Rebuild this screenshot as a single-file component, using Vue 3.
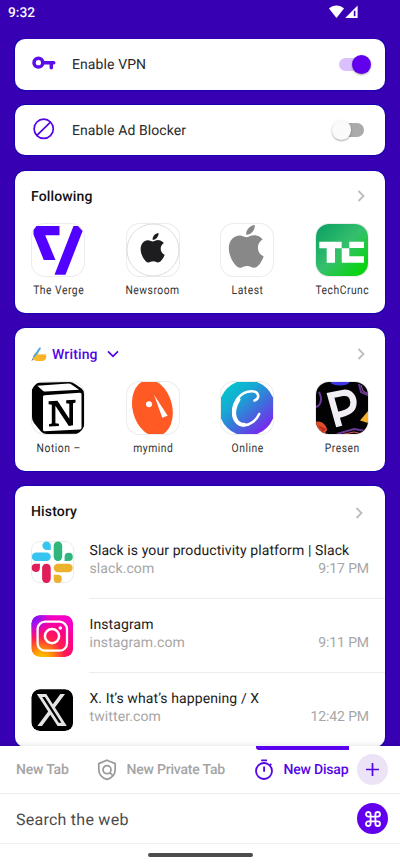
<script setup>
import { ref } from 'vue'

const applePath =
  'M12.152 6.896c-.948 0-2.415-1.078-3.96-1.04-2.04.027-3.91 1.183-4.961 3.014-2.117 3.675-.546 9.103 1.519 12.09 1.013 1.454 2.208 3.09 3.792 3.039 1.52-.065 2.09-.987 3.935-.987 1.831 0 2.35.987 3.96.948 1.637-.026 2.676-1.48 3.676-2.948 1.156-1.688 1.636-3.325 1.662-3.415-.039-.013-3.182-1.221-3.22-4.857-.026-3.04 2.48-4.494 2.597-4.559-1.429-2.09-3.623-2.324-4.39-2.376-2-.156-3.675 1.09-4.61 1.09zM15.53 3.83c.843-1.012 1.4-2.427 1.245-3.83-1.207.052-2.662.805-3.532 1.818-.78.896-1.454 2.338-1.273 3.714 1.338.104 2.715-.688 3.559-1.701'

const vpn = ref(true)
const adBlocker = ref(false)

const following = [
  { id: 'verge', label: 'The Verge' },
  { id: 'newsroom', label: 'Newsroom' },
  { id: 'latest', label: 'Latest' },
  { id: 'techcrunch', label: 'TechCrunc' },
]
const writing = [
  { id: 'notion', label: 'Notion –' },
  { id: 'mymind', label: 'mymind' },
  { id: 'canva', label: 'Online' },
  { id: 'presen', label: 'Presen' },
]
const history = [
  { id: 'slack', title: 'Slack is your productivity platform | Slack', host: 'slack.com', time: '9:17 PM' },
  { id: 'instagram', title: 'Instagram', host: 'instagram.com', time: '9:11 PM' },
  { id: 'x', title: 'X. It’s what’s happening / X', host: 'twitter.com', time: '12:42 PM' },
]
</script>

<template>
  <div class="screen">
    <header class="status">
      <span class="clock">9:32</span>
      <svg class="signals" width="30" height="14" viewBox="0 0 30 14">
        <path d="M0 3.6C4-.6 11-.6 15 3.6L7.5 13z" fill="#fff" />
        <path d="M28.6.6V13H16.2z" fill="#fff" />
        <path d="M25.6 5.8v5.4" stroke="#3700b3" stroke-width="1.6" />
      </svg>
    </header>

    <main class="content">
      <section class="card toggle-card">
        <svg class="lead" width="26" height="26" viewBox="0 0 26 26" fill="none" stroke="#5b0ee8">
          <circle cx="7.4" cy="11.7" r="4.4" stroke-width="3.5" />
          <path d="M12.5 11.7H22.7" stroke-width="3.5" stroke-linecap="round" />
          <path d="M20.3 12.4v4.4" stroke-width="3.5" stroke-linecap="round" />
        </svg>
        <span class="toggle-label">Enable VPN</span>
        <button class="switch" :class="{ on: vpn }" @click="vpn = !vpn"><i></i></button>
      </section>

      <section class="card toggle-card">
        <svg class="lead" width="26" height="26" viewBox="0 0 26 26" fill="none" stroke="#5305e6" stroke-width="1.7">
          <circle cx="12.7" cy="11.8" r="9.6" />
          <path d="M5.9 18.4L19.5 5.2" />
        </svg>
        <span class="toggle-label">Enable Ad Blocker</span>
        <button class="switch" :class="{ on: adBlocker }" @click="adBlocker = !adBlocker"><i></i></button>
      </section>

      <section class="card group">
        <div class="head">
          <h2>Following</h2>
          <svg class="chev" width="8" height="12" viewBox="0 0 8 12"><path d="M1.5 1l5 5-5 5" /></svg>
        </div>
        <div class="tiles">
          <a v-for="s in following" :key="s.id" class="site">
            <span class="tile">
              <svg v-if="s.id === 'verge'" viewBox="0 0 54 54">
                <path d="M5.5 3H28.5V12.3H14.2L24.5 37H12.8L2.5 11.5V7zM42.5 3h4.5l4.6 5L34.5 51.7h-11z" fill="#5200ff" />
              </svg>
              <svg v-else-if="s.id === 'newsroom'" viewBox="0 0 54 54">
                <circle cx="27" cy="27" r="26" fill="#fff" stroke="#dcdcdc" />
                <path :d="applePath" transform="translate(11.9 10) scale(1.23)" fill="#1d1d1f" />
              </svg>
              <svg v-else-if="s.id === 'latest'" viewBox="0 0 54 54">
                <path :d="applePath" transform="translate(4.9 2) scale(1.78)" fill="#888" />
              </svg>
              <svg v-else viewBox="0 0 54 54">
                <defs>
                  <linearGradient id="tc" x1="0" y1="0" x2="1" y2="1">
                    <stop offset="0" stop-color="#0a9e63" />
                    <stop offset=".5" stop-color="#35c06c" />
                    <stop offset=".8" stop-color="#10d021" />
                    <stop offset="1" stop-color="#00d600" />
                  </linearGradient>
                </defs>
                <rect x="1" y="1" width="52" height="52" rx="13" fill="url(#tc)" />
                <path d="M4.3 18.7H26.7V25.2H20V39.7H11.7V25.2H4.3zM34.3 18.7H49v6.2H34.3zM26.7 25.2h7.6v8.1H49v6.4H26.7z" fill="#fff" />
              </svg>
            </span>
            <span class="site-label">{{ s.label }}</span>
          </a>
        </div>
      </section>

      <section class="card group writing">
        <div class="head">
          <svg class="hand" width="16" height="15" viewBox="0 0 16 15">
            <path d="M1.8 9.6C3 6.900 4.800 5.300 6.600 5.100c1.200-.1 1.300.9.6 1.700l-.6.8 7-.4c1.500 0 2 1 1.600 2.100.3 2.900-1.400 4.700-4.200 4.700H5.600c-2.400 0-4-1.500-3.800-4.400z" fill="#fbb92a" />
            <path d="M9.4 9.400h5.400M9.600 11.400h4.600" stroke="#e79a1c" stroke-width=".6" />
            <path d="M3 10L8.900 1.400" stroke="#4aa9e6" stroke-width="1.900" stroke-linecap="round" />
            <path d="M5.400 9.400c-.6 1.400-1.900 2.200-3.200 1.600" stroke="#fbb92a" stroke-width="1.600" fill="none" />
            <path d="M.4 14.200l1.200-3 1.200.8z" fill="#4d6f93" />
          </svg>
          <h2 class="accent">Writing</h2>
          <svg class="down" width="12" height="8" viewBox="0 0 12 8"><path d="M1 1.3l5 5 5-5" /></svg>
          <svg class="chev" width="8" height="12" viewBox="0 0 8 12"><path d="M1.5 1l5 5-5 5" /></svg>
        </div>
        <div class="tiles">
          <a v-for="s in writing" :key="s.id" class="site">
            <span class="tile">
              <svg v-if="s.id === 'notion'" viewBox="0 0 54 54">
                <path d="M1 9C1 5 4 2 8 1.7L38 1q3.5 0 6 2l6.5 4.6Q53 9.4 53 13v33q0 6-6.5 6.7L16 53q-4 0-6.5-3L3 42Q1 39.5 1 36z" fill="#000" />
                <path d="M6.3 4.700L37.500 2.500q1.500 0 2.600.8l8 5.400L14.500 10.600q-1.500 0-2.600-.9z" fill="#fff" />
                <path d="M13.500 14.200L49 11.800q1.500 0 1.500 1.500V46.800q0 1.500-1.500 1.600L13.500 50.300q-1.500 0-1.500-1.500V15.700q0-1.400 1.500-1.500z" fill="#fff" />
                <path d="M17.600 20.300L26.500 19.700 38.300 37.800V22.700L35.200 22.200V19.300L44.500 18.700V21.500L42 22.300V44.200L37.800 45 24.400 24.700V42.300L27.900 42.800V44.900L18 45.500V43.200L20.800 42.400V23.700L17.600 23.200z" fill="#000" />
              </svg>
              <svg v-else-if="s.id === 'mymind'" viewBox="0 0 54 54">
                <defs><clipPath id="mm"><rect x="1" y="1" width="52" height="52" /></clipPath></defs>
                <g clip-path="url(#mm)">
                  <ellipse cx="26.4" cy="27" rx="19.8" ry="28.5" transform="rotate(-14 26.4 27)" fill="#ff5924" />
                </g>
                <circle cx="23" cy="23.3" r="3" fill="#fff" />
                <path d="M28 13.7l13.7 21-5.4 2z" fill="#fff" />
              </svg>
              <svg v-else-if="s.id === 'canva'" viewBox="0 0 54 54">
                <defs>
                  <linearGradient id="cv" x1=".15" y1=".1" x2=".85" y2=".9">
                    <stop offset="0" stop-color="#06c5cb" />
                    <stop offset=".3" stop-color="#16a8d4" />
                    <stop offset=".65" stop-color="#4467dc" />
                    <stop offset="1" stop-color="#7d22f0" />
                  </linearGradient>
                  <clipPath id="cvc"><rect x="1" y="1" width="52" height="52" /></clipPath>
                </defs>
                <circle cx="27" cy="27" r="28" fill="url(#cv)" clip-path="url(#cvc)" />
                <g fill="none" stroke="#fff" stroke-linecap="round">
                  <path d="M34.5 19.5C40 17.5 39.5 10.3 31.5 10.3 20.5 10.3 13.2 21 13.2 31c0 8 4.3 13.3 11 13.3 6 0 12-4.8 15-11.3" stroke-width="2.6" />
                  <path d="M18.5 18.5C13.8 25 12.6 34 16.2 39.5c2 3 4.5 4.3 8 4.3" stroke-width="4" />
                </g>
              </svg>
              <svg v-else viewBox="0 0 54 54">
                <defs><clipPath id="pr"><rect x="1" y="1" width="52" height="52" rx="13" /></clipPath></defs>
                <g clip-path="url(#pr)">
                  <rect width="54" height="54" fill="#020204" />
                  <ellipse cx="25" cy="1" rx="9.5" ry="3.5" fill="#3f36e8" />
                  <path d="M44 3l2 8 9 4M1 26c6-2 6-10 3-15M22 53l17-5 12 2" fill="none" stroke="#6b3797" stroke-width="2" />
                  <path d="M46 4l2 6 6 3" fill="none" stroke="#b46dcc" stroke-width=".8" />
                  <path d="M25 54l14-3 8 2" fill="none" stroke="#e3605b" stroke-width="1" />
                  <path d="M45 39.5l8-9.5v12z" fill="#f6ae2d" />
                  <path d="M0 41c7-2 12 4 12 8l-3 5H0z" fill="#e34e2a" />
                  <path d="M3 44l8 4-3 3z" fill="#b62d22" />
                  <path d="M24.2 45.5L15.5 14.4 27.5 12c7-1.3 11 3.5 11 9.5 0 7-4.5 10.3-17 12.8" fill="none" stroke="#f1eef5" stroke-width="6.3" />
                </g>
              </svg>
            </span>
            <span class="site-label">{{ s.label }}</span>
          </a>
        </div>
      </section>

      <section class="card history">
        <div class="history-head">
          <h2>History</h2>
          <svg class="chev" width="8" height="12" viewBox="0 0 8 12"><path d="M1.5 1l5 5-5 5" /></svg>
        </div>
        <article v-for="h in history" :key="h.id" class="entry">
          <span class="favicon" :class="{ framed: h.id === 'slack' }">
            <svg v-if="h.id === 'slack'" viewBox="0 0 42.5 42.5">
              <g fill="#36c5f0"><rect x=".8" y="11.4" width="19" height="8.6" rx="4.3" /><path d="M19.8 8.9h-4.2a4.2 4.2 0 1 1 4.2-4.2z" /></g>
              <g fill="#2eb67d"><rect x="22.7" y=".5" width="8.5" height="19.5" rx="4.2" /><path d="M33.6 20v-4.2a4.1 4.1 0 1 1 4.1 4.2z" /></g>
              <g fill="#e01e5a"><rect x="11.1" y="22.7" width="8.6" height="19.3" rx="4.2" /><path d="M8.9 22.7v4.2a4.1 4.1 0 1 1-4.1-4.2z" /></g>
              <g fill="#ecb22e"><rect x="22.7" y="22.7" width="19" height="8.5" rx="4.2" /><path d="M22.7 33.8h4.2a4.1 4.1 0 1 1-4.2 4.1z" /></g>
            </svg>
            <svg v-else-if="h.id === 'instagram'" viewBox="0 0 42.5 42.5">
              <defs>
                <radialGradient id="ig1" cx=".25" cy="1.08" r="1.1">
                  <stop offset="0" stop-color="#ffd600" />
                  <stop offset=".22" stop-color="#ff9a00" />
                  <stop offset=".5" stop-color="#ff1f4b" />
                  <stop offset=".75" stop-color="#ff0088" />
                  <stop offset="1" stop-color="#f500c4" />
                </radialGradient>
                <radialGradient id="ig2" cx="0" cy="0" r=".6">
                  <stop offset="0" stop-color="#5a18ff" />
                  <stop offset=".4" stop-color="#9c10f5" stop-opacity=".85" />
                  <stop offset="1" stop-color="#f500c4" stop-opacity="0" />
                </radialGradient>
              </defs>
              <rect x=".5" y=".3" width="41.5" height="41.7" rx="8" fill="url(#ig1)" />
              <rect x=".5" y=".3" width="41.5" height="41.7" rx="8" fill="url(#ig2)" />
              <g fill="none" stroke="#fff">
                <rect x="6.6" y="6.7" width="29.4" height="29" rx="7.5" stroke-width="2.3" />
                <circle cx="21" cy="21.2" r="7.1" stroke-width="2.5" />
              </g>
              <circle cx="29.3" cy="13" r="1.8" fill="#fff" />
            </svg>
            <svg v-else viewBox="0 0 42.5 42.5">
              <rect x=".5" y=".3" width="41.5" height="41.7" rx="8" fill="#000" />
              <path transform="translate(5.8 3.2) scale(1.25 1.48)" d="M18.901 1.153h3.68l-8.04 9.19L24 22.846h-7.406l-5.8-7.584-6.638 7.584H.474l8.6-9.83L0 1.154h7.594l5.243 6.932ZM17.61 20.644h2.039L6.486 3.24H4.298Z" fill="#e4e4e4" />
            </svg>
          </span>
          <div class="entry-text">
            <div class="title">{{ h.title }}</div>
            <div class="meta"><span>{{ h.host }}</span><span class="time">{{ h.time }}</span></div>
          </div>
        </article>
      </section>
    </main>

    <footer class="dock">
      <div class="tabs">
        <div class="tab-list">
          <span class="tab first">New Tab</span>
          <span class="tab private">
            <svg width="20" height="22" viewBox="0 0 20 22" fill="none" stroke="#999" stroke-width="1.7">
              <path d="M10 1.2l8.2 3.4v5.9c0 4.6-3.3 8.4-8.2 9.9-4.9-1.5-8.2-5.3-8.2-9.9V4.6z" />
              <circle cx="10" cy="10.7" r="4" />
              <path d="M12.8 13.6l3.4 3.4" />
            </svg>
            New Private Tab
          </span>
          <span class="tab active">
            <svg width="20" height="22" viewBox="0 0 20 22" fill="none" stroke="#5305e6" stroke-width="1.8">
              <circle cx="10" cy="12" r="8" />
              <path d="M7.2 1.3h5.8M10.1 7.6v5.2M15.8 6.4l1.5-1.5" />
            </svg>
            New Disapp
          </span>
        </div>
        <button class="round add">
          <svg width="15" height="15" viewBox="0 0 15 15"><path d="M7.5 1v13M1 7.5h13" stroke="#5305e6" stroke-width="1.7" /></svg>
        </button>
      </div>
      <div class="search">
        <span class="placeholder">Search the web</span>
        <button class="round cmd">
          <svg width="16" height="16" viewBox="0 0 16 16" fill="none" stroke="#fff" stroke-width="1.8">
            <path d="M5.6 5.6V3.3a2.3 2.3 0 1 0-2.3 2.3h9.4a2.3 2.3 0 1 0-2.3-2.3v9.4a2.3 2.3 0 1 0 2.3-2.3H3.3a2.3 2.3 0 1 0 2.3 2.3z" />
          </svg>
        </button>
      </div>
      <div class="nav"><i></i></div>
    </footer>
  </div>
</template>

<style>
body {
  margin: 0;
  background: #fff;
}
</style>

<style scoped>
.screen {
  width: 400px;
  height: 867px;
  overflow: hidden;
  display: flex;
  flex-direction: column;
  background: #3700b3;
  font-family: Roboto, "Liberation Sans", sans-serif;
  text-rendering: geometricPrecision;
  color: #1c1c1c;
}
svg {
  display: block;
  flex: none;
}
button {
  border: 0;
  padding: 0;
}
h2 {
  margin: 0;
  padding-top: 1px;
  font-size: 14px;
  font-weight: 500;
  line-height: 20px;
  letter-spacing: 0.15px;
  color: #111;
}
.status {
  flex: none;
  height: 39px;
  box-sizing: border-box;
  padding: 5px 41px 0 8px;
  display: flex;
  justify-content: space-between;
  align-items: flex-start;
}
.clock {
  font-size: 13.7px;
  line-height: 16px;
  font-weight: 500;
  color: #fff;
}
.content {
  flex: 1;
  min-height: 0;
  overflow: hidden;
  padding: 0 15.5px 0 15.2px;
  display: flex;
  flex-direction: column;
  gap: 15.4px;
}
.card {
  flex: none;
  box-sizing: border-box;
  background: #fff;
  border-radius: 10px;
  box-shadow: 0 0 0 1px rgba(0, 0, 175, 0.5);
}
.toggle-card {
  height: 50.5px;
  display: flex;
  align-items: center;
  padding: 0 13.3px 0 15.8px;
}
.lead {
  margin-right: 15px;
}
.toggle-label {
  flex: 1;
  padding-top: 1px;
  font-size: 14px;
  line-height: 20px;
  letter-spacing: 0.1px;
  color: #2a2a2a;
}
.switch {
  width: 33px;
  height: 20px;
  display: flex;
  align-items: center;
  margin-right: 6.5px;
  background: transparent;
}
.switch::before {
  content: "";
  flex: none;
  width: 28px;
  height: 13.5px;
  border-radius: 7px;
  background: #aaa;
  margin-left: 4.5px;
}
.switch i {
  width: 19.5px;
  height: 19.5px;
  border-radius: 50%;
  background: #fafafa;
  box-shadow: 0 1px 2px rgba(0, 0, 0, 0.35);
  margin-left: -32.5px;
  flex: none;
}
.switch.on {
  margin-right: 0;
}
.switch.on::before {
  background: #d9bffb;
  margin-left: 0.5px;
}
.switch.on i {
  background: #6200ee;
  margin-left: -15px;
}
.group {
  height: 142.2px;
}
.head {
  height: 52px;
  box-sizing: border-box;
  display: flex;
  align-items: center;
  padding: 0 19.5px 1px 15.8px;
}
.writing .head {
  height: 52.6px;
}
.chev {
  margin-left: auto;
  fill: none;
  stroke: #bcbcbc;
  stroke-width: 1.8;
}
.hand {
  margin-right: 5px;
}
.accent {
  color: #5305e6;
}
.down {
  margin-left: 9.5px;
  fill: none;
  stroke: #5305e6;
  stroke-width: 1.7;
}
.tiles {
  display: flex;
  justify-content: space-between;
  padding: 0 15.6px 0 16.2px;
}
.site {
  width: 54px;
  display: flex;
  flex-direction: column;
  align-items: center;
}
.tile {
  width: 54px;
  height: 54px;
  box-sizing: border-box;
  border-radius: 14px;
  overflow: hidden;
  box-shadow: inset 0 0 0 1px #ececec;
}
.tile svg {
  width: 54px;
  height: 54px;
}
.site-label {
  margin-top: 5px;
  font-size: 12px;
  line-height: 16px;
  letter-spacing: 0.6px;
  white-space: nowrap;
  transform: scaleX(0.86);
  color: #333;
}
.history {
  height: 261px;
}
.history-head {
  height: 39px;
  box-sizing: border-box;
  display: flex;
  align-items: center;
  padding: 12px 21.5px 0 15.8px;
}
.history-head .chev {
  margin-top: 3px;
}
.entry {
  height: 74px;
  display: flex;
  padding-left: 16.3px;
}
.favicon {
  flex: none;
  width: 42.5px;
  height: 42.5px;
  margin-top: 16px;
  border-radius: 9px;
  overflow: hidden;
}
.favicon svg {
  width: 42.5px;
  height: 42.5px;
}
.framed {
  box-shadow: inset 0 0 0 1px #ececec;
}
.entry-text {
  flex: 1;
  margin-left: 15.5px;
  padding: 17px 15.5px 0 0;
  border-bottom: 1px solid #ececec;
}
.entry:last-child .entry-text {
  border-bottom: 0;
}
.title {
  font-size: 14px;
  line-height: 18.5px;
  letter-spacing: 0.1px;
  white-space: nowrap;
}
.meta {
  display: flex;
  justify-content: space-between;
  font-size: 14px;
  line-height: 18.5px;
  letter-spacing: 0.1px;
  color: #a6a6a6;
}
.time {
  letter-spacing: -0.1px;
}
.dock {
  flex: none;
  height: 121px;
  background: #fff;
  box-shadow: 0 -1px 5px rgba(0, 0, 0, 0.1);
  position: relative;
}
.tabs {
  height: 48px;
  box-sizing: border-box;
  border-bottom: 1px solid #ececec;
  display: flex;
  justify-content: space-between;
  padding-right: 12px;
  align-items: center;
}
.tab-list {
  width: 349.4px;
  height: 47px;
  overflow: hidden;
  display: flex;
}
.tab {
  flex: none;
  display: flex;
  align-items: center;
  gap: 9.5px;
  padding-top: 1px;
  white-space: nowrap;
  font-size: 14px;
  font-weight: 500;
  letter-spacing: -0.2px;
  color: #a4a4a4;
}
.first {
  width: 81px;
  margin-left: 16px;
}
.private {
  width: 157px;
}
.active {
  color: #5305e6;
  position: relative;
}
.active::before {
  content: "";
  position: absolute;
  top: 0;
  left: 2px;
  width: 140px;
  height: 3.5px;
  border-radius: 0 0 3px 3px;
  background: #5b00ee;
}
.round {
  flex: none;
  width: 31px;
  height: 31px;
  border-radius: 50%;
  display: flex;
  align-items: center;
  justify-content: center;
}
.add {
  background: #ece4f6;
}
.cmd {
  background: #6200ee;
}
.search {
  height: 50px;
  box-sizing: border-box;
  border-bottom: 1px solid #f0f0f0;
  display: flex;
  align-items: center;
  justify-content: space-between;
  padding: 0 12px 0 16px;
}
.placeholder {
  padding-top: 1px;
  font-size: 16px;
  letter-spacing: 0.25px;
  color: #4a4a4a;
}
.nav {
  display: flex;
  justify-content: center;
  padding-top: 9px;
}
.nav i {
  width: 105px;
  height: 4px;
  border-radius: 2px;
  background: #4c4c4c;
}
</style>
